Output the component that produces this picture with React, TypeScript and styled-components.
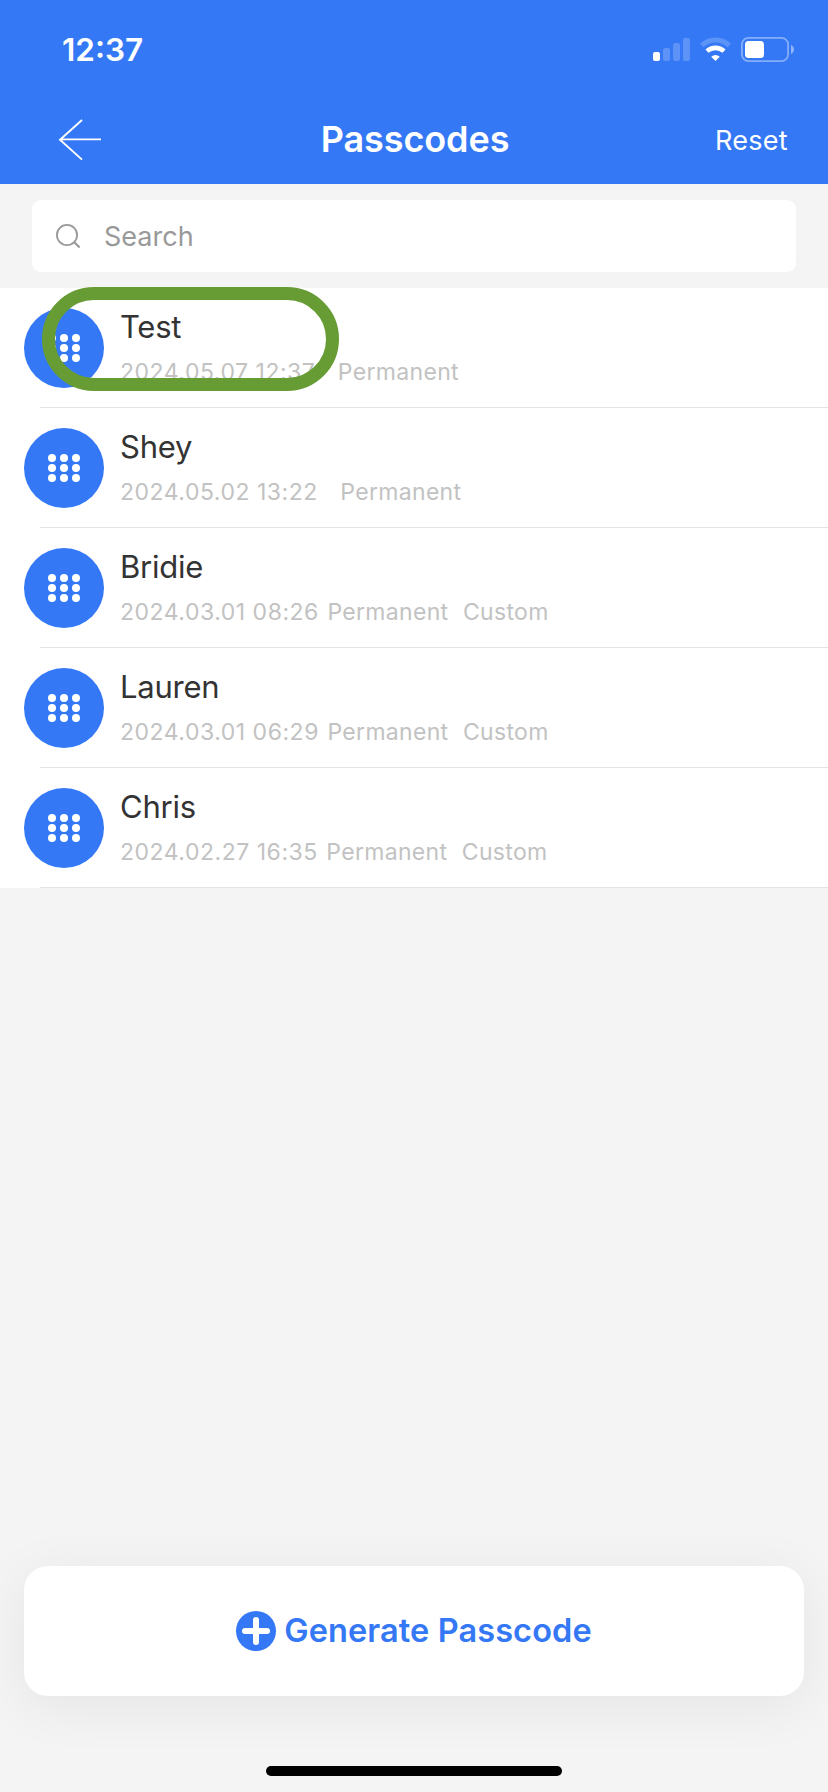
import React from "react";
import styled, { createGlobalStyle } from "styled-components";

const blue = "#3478f6";

const GlobalStyle = createGlobalStyle`
  * { box-sizing: border-box; }
  body { margin: 0; background: #f4f4f4; }
`;

const Screen = styled.div`
  display: flex;
  flex-direction: column;
  width: 828px;
  height: 1792px;
  background: #f4f4f4;
  font-family: Inter, "Liberation Sans", sans-serif;
  overflow: hidden;
`;

const StatusBar = styled.div`
  display: flex;
  align-items: center;
  justify-content: space-between;
  height: 96px;
  padding: 4px 34px 0 62px;
  background: ${blue};
  color: #fff;
`;

const Clock = styled.span`
  font-size: 31.5px;
  font-weight: 600;
  line-height: 40px;
`;

const StatusIcons = styled.svg`
  display: block;
  width: 142px;
  height: 26px;
`;

const NavBar = styled.header`
  display: grid;
  grid-template-columns: 1fr auto 1fr;
  align-items: center;
  height: 88px;
  padding: 0 40px;
  background: ${blue};
  color: #fff;
`;

const BackButton = styled.button`
  display: block;
  width: 62px;
  padding: 0 0 0 18px;
  border: 0;
  background: none;
  svg { display: block; }
`;

const Title = styled.h1`
  margin: 0;
  padding: 0 0 2px 2px;
  font-size: 36px;
  font-weight: 600;
  line-height: 44px;
  letter-spacing: -0.1px;
`;

const ResetButton = styled.button`
  justify-self: end;
  padding: 1px 0 0;
  border: 0;
  background: none;
  color: #fff;
  font: 400 27px/34px Inter, sans-serif;
  letter-spacing: 0.3px;
`;

const SearchArea = styled.div`
  padding: 16px 32px;
`;

const SearchBox = styled.label`
  display: flex;
  align-items: center;
  gap: 23px;
  height: 72px;
  padding: 0 23px;
  border-radius: 9px;
  background: #fff;
  color: #999;
  font-size: 27px;
  line-height: 34px;
`;

const SearchHint = styled.span`
  padding-top: 1px;
`;

const List = styled.ul`
  position: relative;
  margin: 0;
  padding: 0;
  list-style: none;
  background: #fff;
`;

const Row = styled.li`
  display: flex;
  align-items: center;
  gap: 16px;
  height: 120px;
  padding-left: 24px;
  background: linear-gradient(#e4e4e4, #e4e4e4) 40px 100% / 100% 1px no-repeat;
`;

const KeypadBadge = styled.div`
  display: grid;
  grid-template-columns: repeat(3, 8px);
  grid-auto-rows: 8px;
  gap: 2px 4px;
  place-content: center;
  width: 80px;
  height: 80px;
  border-radius: 50%;
  background: ${blue};
`;

const Dot = styled.i`
  border-radius: 50%;
  background: #fff;
`;

const RowText = styled.div`
  display: flex;
  flex-direction: column;
  gap: 11px;
  padding-bottom: 1px;
`;

const Name = styled.div`
  color: #333;
  font-size: 31px;
  line-height: 38px;
  letter-spacing: -0.25px;
`;

const Details = styled.div`
  display: flex;
  color: #c2c2c2;
  font-size: 23px;
  line-height: 30px;
  white-space: pre;
`;

const DateText = styled.span`
  letter-spacing: 0.52px;
`;

const Kind = styled.span<{ $gap: number }>`
  margin-left: ${(p) => p.$gap}px;
  letter-spacing: 0.32px;
`;

const Highlight = styled.div`
  position: absolute;
  left: 42px;
  top: -1px;
  width: 297px;
  height: 104px;
  border: 13px solid #679c35;
  border-radius: 52px;
`;

const Footer = styled.footer`
  display: flex;
  flex-direction: column;
  align-items: center;
  margin-top: auto;
  padding: 0 24px 16px;
`;

const GenerateButton = styled.button`
  display: flex;
  align-items: center;
  justify-content: center;
  gap: 8px;
  width: 100%;
  height: 130px;
  margin-bottom: 70px;
  padding: 0;
  border: 0;
  border-radius: 24px;
  background: #fff;
  box-shadow: 0 10px 56px rgba(0, 0, 0, 0.065);
  color: ${blue};
  font: 600 32.5px/40px Inter, sans-serif;
  letter-spacing: 0.1px;
`;

const HomeIndicator = styled.div`
  width: 296px;
  height: 10px;
  border-radius: 5px;
  background: #000;
`;

interface Passcode {
  name: string;
  date: string;
  kinds: { label: string; gap: number }[];
}

const permanent: Passcode["kinds"] = [{ label: "Permanent", gap: 22.5 }];
const customPermanent: Passcode["kinds"] = [
  { label: "Permanent", gap: 8.5 },
  { label: "Custom", gap: 14.5 },
];

const passcodes: Passcode[] = [
  { name: "Test", date: "2024.05.07 12:37", kinds: permanent },
  { name: "Shey", date: "2024.05.02 13:22", kinds: permanent },
  { name: "Bridie", date: "2024.03.01 08:26", kinds: customPermanent },
  { name: "Lauren", date: "2024.03.01 06:29", kinds: customPermanent },
  { name: "Chris", date: "2024.02.27 16:35", kinds: customPermanent },
];

export default function App() {
  return (
    <Screen>
      <GlobalStyle />
      <StatusBar>
        <Clock>12:37</Clock>
        <StatusIcons viewBox="0 0 142 26" fill="#fff">
          <rect x="1" y="15" width="7" height="9" rx="2" />
          <g opacity="0.2">
            <rect x="11" y="11" width="7" height="13" rx="2" />
            <rect x="21" y="6" width="7" height="18" rx="2" />
            <rect x="31" y="1" width="7" height="23" rx="2" />
          </g>
          <path d="M49.7 8.4A20.2 20.2 0 0 1 77.3 8.4" fill="none" stroke="#fff" strokeWidth="5" opacity="0.2" />
          <path d="M55 14.2A12.4 12.4 0 0 1 72 14.2" fill="none" stroke="#fff" strokeWidth="4.6" />
          <path d="M59.2 19.8Q63.5 16.2 67.8 19.8L63.5 24Z" />
          <rect x="89.9" y="0.9" width="46.2" height="23.2" rx="6.5" fill="none" stroke="#fff" strokeWidth="1.8" opacity="0.4" />
          <rect x="93" y="4" width="19" height="17" rx="3.5" />
          <path d="M139 8C141 9 142 10.7 142 12.5S141 16 139 17Z" opacity="0.45" />
        </StatusIcons>
      </StatusBar>
      <NavBar>
        <BackButton aria-label="Back">
          <svg width="44" height="42" viewBox="0 0 44 42" fill="none" stroke="#fff" strokeWidth="1.9">
            <path d="M24 1L2 20.7L24 40.6M2 20.4H43" />
          </svg>
        </BackButton>
        <Title>Passcodes</Title>
        <ResetButton>Reset</ResetButton>
      </NavBar>
      <SearchArea>
        <SearchBox>
          <svg width="26" height="26" viewBox="0 0 26 26" fill="none" stroke="#999" strokeWidth="1.8">
            <circle cx="12" cy="12" r="10.1" />
            <path d="M19.3 19.3L24.6 24.5" strokeWidth="2.2" />
          </svg>
          <SearchHint>Search</SearchHint>
        </SearchBox>
      </SearchArea>
      <List>
        {passcodes.map((p) => (
          <Row key={p.name}>
            <KeypadBadge>
              {Array.from({ length: 9 }, (_, i) => (
                <Dot key={i} />
              ))}
            </KeypadBadge>
            <RowText>
              <Name>{p.name}</Name>
              <Details>
                <DateText>{p.date}</DateText>
                {p.kinds.map((k) => (
                  <Kind key={k.label} $gap={k.gap}>{k.label}</Kind>
                ))}
              </Details>
            </RowText>
          </Row>
        ))}
        <Highlight />
      </List>
      <Footer>
        <GenerateButton>
          <svg width="40" height="40" viewBox="0 0 40 40">
            <circle cx="20" cy="20" r="20" fill={blue} />
            <path d="M9 20H31M20 9V31" stroke="#fff" strokeWidth="6" strokeLinecap="round" />
          </svg>
          <span>Generate Passcode</span>
        </GenerateButton>
        <HomeIndicator />
      </Footer>
    </Screen>
  );
}
